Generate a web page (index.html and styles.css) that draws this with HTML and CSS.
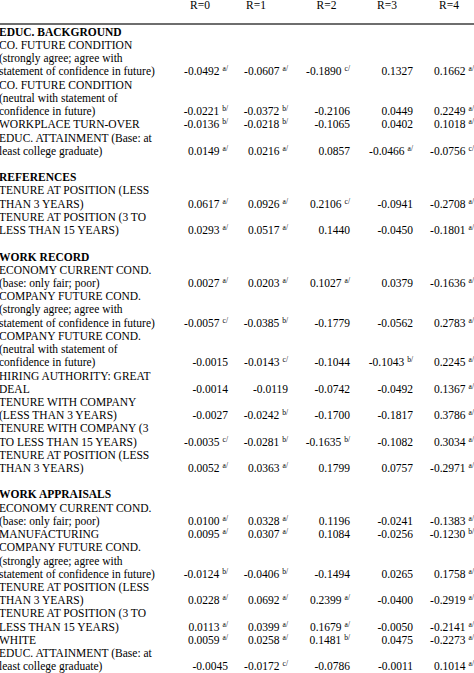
FILE: index.html
```html
<!DOCTYPE html>
<html>
<head>
<meta charset="utf-8">
<link rel="stylesheet" href="styles.css">
</head>
<body>
<div class="table">
  <div class="row head">
    <div class="lab"></div>
    <div class="h">R=0</div><div class="h">R=1</div><div class="h">R=2</div><div class="h">R=3</div><div class="h">R=4</div>
  </div>
  <div class="rule"></div>

  <div class="row"><div class="lab sec">EDUC. BACKGROUND</div></div>
  <div class="row">
    <div class="lab">CO. FUTURE CONDITION<br>(strongly agree; agree with<br>statement of confidence in future)</div>
    <div class="v">-0.0492<sup>a/</sup></div><div class="v">-0.0607<sup>a/</sup></div><div class="v">-0.1890<sup>c/</sup></div><div class="v">0.1327</div><div class="v">0.1662<sup>a/</sup></div>
  </div>
  <div class="row">
    <div class="lab">CO. FUTURE CONDITION<br>(neutral with statement of<br>confidence in future)</div>
    <div class="v">-0.0221<sup>b/</sup></div><div class="v">-0.0372<sup>b/</sup></div><div class="v">-0.2106</div><div class="v">0.0449</div><div class="v">0.2249<sup>a/</sup></div>
  </div>
  <div class="row">
    <div class="lab">WORKPLACE TURN-OVER</div>
    <div class="v">-0.0136<sup>b/</sup></div><div class="v">-0.0218<sup>b/</sup></div><div class="v">-0.1065</div><div class="v">0.0402</div><div class="v">0.1018<sup>a/</sup></div>
  </div>
  <div class="row">
    <div class="lab">EDUC. ATTAINMENT (Base: at<br>least college graduate)</div>
    <div class="v">0.0149<sup>a/</sup></div><div class="v">0.0216<sup>a/</sup></div><div class="v">0.0857</div><div class="v">-0.0466<sup>a/</sup></div><div class="v">-0.0756<sup>c/</sup></div>
  </div>
  <div class="blank"></div>

  <div class="row"><div class="lab sec">REFERENCES</div></div>
  <div class="row">
    <div class="lab">TENURE AT POSITION (LESS<br>THAN 3 YEARS)</div>
    <div class="v">0.0617<sup>a/</sup></div><div class="v">0.0926<sup>a/</sup></div><div class="v">0.2106<sup>c/</sup></div><div class="v">-0.0941</div><div class="v">-0.2708<sup>a/</sup></div>
  </div>
  <div class="row">
    <div class="lab">TENURE AT POSITION (3 TO<br>LESS THAN 15 YEARS)</div>
    <div class="v">0.0293<sup>a/</sup></div><div class="v">0.0517<sup>a/</sup></div><div class="v">0.1440</div><div class="v">-0.0450</div><div class="v">-0.1801<sup>a/</sup></div>
  </div>
  <div class="blank"></div>

  <div class="row"><div class="lab sec">WORK RECORD</div></div>
  <div class="row">
    <div class="lab">ECONOMY CURRENT COND.<br>(base: only fair; poor)</div>
    <div class="v">0.0027<sup>a/</sup></div><div class="v">0.0203<sup>a/</sup></div><div class="v">0.1027<sup>a/</sup></div><div class="v">0.0379</div><div class="v">-0.1636<sup>a/</sup></div>
  </div>
  <div class="row">
    <div class="lab">COMPANY FUTURE COND.<br>(strongly agree; agree with<br>statement of confidence in future)</div>
    <div class="v">-0.0057<sup>c/</sup></div><div class="v">-0.0385<sup>b/</sup></div><div class="v">-0.1779</div><div class="v">-0.0562</div><div class="v">0.2783<sup>a/</sup></div>
  </div>
  <div class="row">
    <div class="lab">COMPANY FUTURE COND.<br>(neutral with statement of<br>confidence in future)</div>
    <div class="v">-0.0015</div><div class="v">-0.0143<sup>c/</sup></div><div class="v">-0.1044</div><div class="v">-0.1043<sup>b/</sup></div><div class="v">0.2245<sup>a/</sup></div>
  </div>
  <div class="row">
    <div class="lab">HIRING AUTHORITY: GREAT<br>DEAL</div>
    <div class="v">-0.0014</div><div class="v">-0.0119</div><div class="v">-0.0742</div><div class="v">-0.0492</div><div class="v">0.1367<sup>a/</sup></div>
  </div>
  <div class="row">
    <div class="lab">TENURE WITH COMPANY<br>(LESS THAN 3 YEARS)</div>
    <div class="v">-0.0027</div><div class="v">-0.0242<sup>b/</sup></div><div class="v">-0.1700</div><div class="v">-0.1817</div><div class="v">0.3786<sup>a/</sup></div>
  </div>
  <div class="row">
    <div class="lab">TENURE WITH COMPANY (3<br>TO LESS THAN 15 YEARS)</div>
    <div class="v">-0.0035<sup>c/</sup></div><div class="v">-0.0281<sup>b/</sup></div><div class="v">-0.1635<sup>b/</sup></div><div class="v">-0.1082</div><div class="v">0.3034<sup>a/</sup></div>
  </div>
  <div class="row">
    <div class="lab">TENURE AT POSITION (LESS<br>THAN 3 YEARS)</div>
    <div class="v">0.0052<sup>a/</sup></div><div class="v">0.0363<sup>a/</sup></div><div class="v">0.1799</div><div class="v">0.0757</div><div class="v">-0.2971<sup>a/</sup></div>
  </div>
  <div class="blank"></div>

  <div class="row"><div class="lab sec">WORK APPRAISALS</div></div>
  <div class="row">
    <div class="lab">ECONOMY CURRENT COND.<br>(base: only fair; poor)</div>
    <div class="v">0.0100<sup>a/</sup></div><div class="v">0.0328<sup>a/</sup></div><div class="v">0.1196</div><div class="v">-0.0241</div><div class="v">-0.1383<sup>a/</sup></div>
  </div>
  <div class="row">
    <div class="lab">MANUFACTURING</div>
    <div class="v">0.0095<sup>a/</sup></div><div class="v">0.0307<sup>a/</sup></div><div class="v">0.1084</div><div class="v">-0.0256</div><div class="v">-0.1230<sup>b/</sup></div>
  </div>
  <div class="row">
    <div class="lab">COMPANY FUTURE COND.<br>(strongly agree; agree with<br>statement of confidence in future)</div>
    <div class="v">-0.0124<sup>b/</sup></div><div class="v">-0.0406<sup>b/</sup></div><div class="v">-0.1494</div><div class="v">0.0265</div><div class="v">0.1758<sup>a/</sup></div>
  </div>
  <div class="row">
    <div class="lab">TENURE AT POSITION (LESS<br>THAN 3 YEARS)</div>
    <div class="v">0.0228<sup>a/</sup></div><div class="v">0.0692<sup>a/</sup></div><div class="v">0.2399<sup>a/</sup></div><div class="v">-0.0400</div><div class="v">-0.2919<sup>a/</sup></div>
  </div>
  <div class="row">
    <div class="lab">TENURE AT POSITION (3 TO<br>LESS THAN 15 YEARS)</div>
    <div class="v">0.0113<sup>a/</sup></div><div class="v">0.0399<sup>a/</sup></div><div class="v">0.1679<sup>a/</sup></div><div class="v">-0.0050</div><div class="v">-0.2141<sup>a/</sup></div>
  </div>
  <div class="row">
    <div class="lab">WHITE</div>
    <div class="v">0.0059<sup>a/</sup></div><div class="v">0.0258<sup>a/</sup></div><div class="v">0.1481<sup>b/</sup></div><div class="v">0.0475</div><div class="v">-0.2273<sup>a/</sup></div>
  </div>
  <div class="row">
    <div class="lab">EDUC. ATTAINMENT (Base: at<br>least college graduate)</div>
    <div class="v">-0.0045</div><div class="v">-0.0172<sup>c/</sup></div><div class="v">-0.0786</div><div class="v">-0.0011</div><div class="v">0.1014<sup>a/</sup></div>
  </div>
</div>
</body>
</html>
```

FILE: styles.css
```css
html, body {
  margin: 0;
  padding: 0;
  background: #ffffff;
  overflow: hidden;
}

body {
  font-family: "Liberation Serif", "Times New Roman", serif;
  font-size: 11.5px;
  line-height: 13.22px;
  color: #000000;
}

.table {
  width: 481px;
  margin: -1.4px 0 0 -1px;
}

.row {
  display: grid;
  grid-template-columns: 171px 62px 62px 62px 62px 62px;
  align-items: end;
}

.lab {
  white-space: nowrap;
}

.sec {
  font-weight: bold;
}

.head {
  padding-bottom: 11.5px;
}

.h {
  text-align: center;
}

.head > .h:nth-child(2) { padding-right: 2px; }
.head > .h:nth-child(3) { padding-right: 14px; }
.head > .h:nth-child(4) { padding-left: 3px; }

.rule {
  height: 2px;
  background: #6e6e6e;
  margin-bottom: 0.5px;
}

.v {
  text-align: right;
  white-space: nowrap;
}

.row > .v:nth-child(2) { padding-right: 4px; }
.row > .v:nth-child(3) { padding-right: 6px; }
.row > .v:nth-child(4) { padding-right: 6px; }
.row > .v:nth-child(5) { padding-right: 5px; }
.row > .v:nth-child(6) { padding-right: 6px; }

.v sup {
  font-size: 7.5px;
  line-height: 0;
  vertical-align: 4px;
  margin-left: 3px;
}

.blank {
  height: 13.22px;
}
```
